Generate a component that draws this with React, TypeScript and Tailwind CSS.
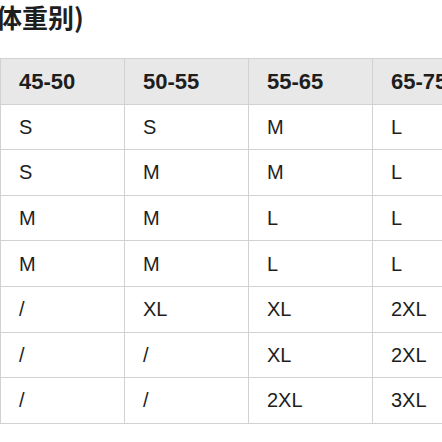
const headers = ["45-50", "50-55", "55-65", "65-75", "75-85"]

const rows = [
  ["S", "S", "M", "L", "XL"],
  ["S", "M", "M", "L", "XL"],
  ["M", "M", "L", "L", "XL"],
  ["M", "M", "L", "L", "XL"],
  ["/", "XL", "XL", "2XL", "2XL"],
  ["/", "/", "XL", "2XL", "3XL"],
  ["/", "/", "2XL", "3XL", "3XL"],
]

export default function App() {
  const cell =
    "flex h-[45.6px] items-center border-r border-b border-[#d2d2d2] pl-[18px]"

  return (
    <div className="h-[442px] w-[442px] overflow-hidden bg-white font-['Liberation_Sans','Noto_Sans_CJK_SC',sans-serif] text-[#1e1e1e]">
      <h1 className="ml-[-4px] pt-[4px] font-['Noto_Sans_CJK_SC',sans-serif] text-[26px] font-bold leading-none whitespace-nowrap">
        体重别)
      </h1>

      <div className="mt-[28px] grid w-[620px] grid-cols-[repeat(5,124px)] border-t border-l border-[#d2d2d2]">
        {headers.map((h) => (
          <div
            key={h}
            className={`${cell} bg-[#e8e8e8] text-[22px] font-bold`}
          >
            {h}
          </div>
        ))}
        {rows.map((row, i) =>
          row.map((v, j) => (
            <div key={`${i}-${j}`} className={`${cell} text-[20px]`}>
              {v}
            </div>
          ))
        )}
      </div>
    </div>
  )
}
